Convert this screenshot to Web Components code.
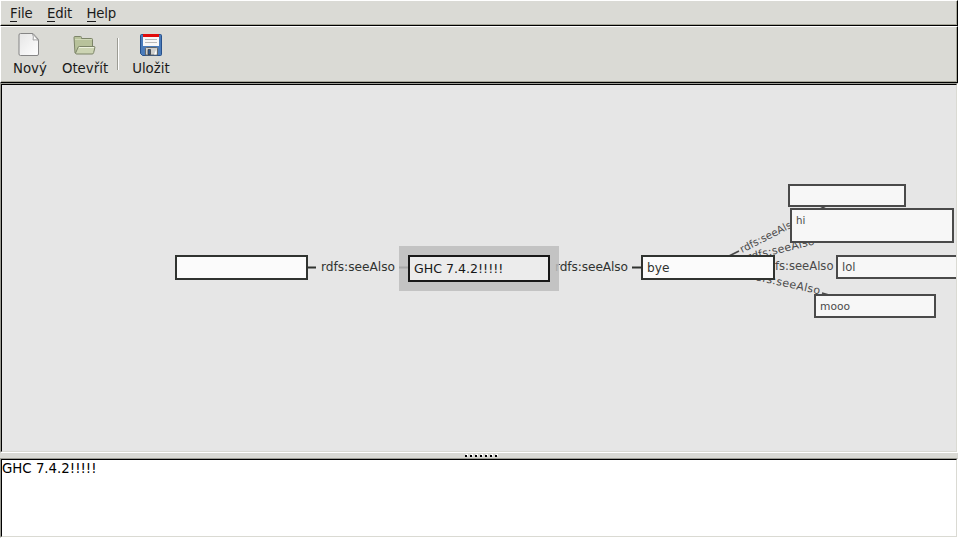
<!DOCTYPE html>
<html lang="cs"><head><meta charset="utf-8"><title>Graph editor</title>
<style>html,body{margin:0;height:100%;overflow:hidden}body{font:13.33px "DejaVu Sans",sans-serif;color:#1a1a1a;background:#dadad5}</style></head>
<body><graph-app></graph-app>
<script>
const define=(name,html,after)=>{
  const t=document.createElement('template');t.innerHTML=html;
  customElements.define(name,class extends HTMLElement{
    constructor(){super();this.attachShadow({mode:'open'}).append(t.content.cloneNode(true));}
    connectedCallback(){if(after)after(this);}
  });
};
define('menu-item',`<style>:host{display:block;letter-spacing:-.2px}u{text-decoration:none;display:inline-block;line-height:14px;border-bottom:1px solid #1a1a1a}</style><u></u><slot></slot>`,
 e=>e.shadowRoot.querySelector('u').textContent=e.getAttribute('key'));
define('menu-bar',`<style>:host{display:flex;flex:none;box-sizing:border-box;height:26px;padding:5px 0 0 9px;gap:14.500px;line-height:16px;border:solid;border-width:1px;border-color:#fff #000 #000 #fff;box-shadow:inset -1px -1px #a6a699}</style><slot></slot>`);
define('tool-button',`<style>:host{display:flex;flex-direction:column;align-items:center;height:49px}span{line-height:16px;margin-top:4px;white-space:nowrap}::slotted(svg){display:block;width:24px;height:24px}</style><slot name="icon"></slot><span><slot></slot></span>`);
define('tool-separator',`<style>:host{display:block;width:1px;height:32px;margin-top:5px;background:#9c9c94;border-right:1px solid #fff}</style>`);
define('tool-bar',`<style>:host{display:flex;flex:none;box-sizing:border-box;height:57px;padding:6px 0 0 12px;border:solid;border-width:1px;border-color:#fff #000 #000 #fff;box-shadow:inset -1px -1px #a6a699}
tool-button:nth-of-type(2){margin-left:15px}tool-button:nth-of-type(3){margin-left:13px}tool-separator{margin-left:9px}</style>
<tool-button><svg slot="icon" viewBox="0 0 24 24"><defs><linearGradient id="p" x2="1" y2="1"><stop stop-color="#e5e5e5"/><stop offset="1" stop-color="#fff"/></linearGradient></defs><path d="M2.500.5H15L20.500 6.500V21q0 1.500-1.500 1.500H2.500Q1 22.500 1 21V2Q1 .5 2.500.5Z" fill="url(#p)" stroke="#858585"/><path d="M14.500.7q1.400 3 .6 6.300 3-.5 5.200.2Z" fill="#fff" stroke="#999" stroke-width=".9"/></svg>Nový</tool-button>
<tool-button><svg slot="icon" viewBox="0 0 24 24"><path d="M1 4.500q0-1 1-1H7.500q1 0 1 1v1H18.500q1 0 1 1V20H2Z" fill="#b8c29b" stroke="#7c8468"/><path d="M2 6.500h16.800" stroke="#d0d8b8"/><path d="M5 14.500q.3-1 1.300-1H21q1 0 .9 1L20.700 19.500q-.3 1.500-1.500 1.500H3.500q-1 0-.8-1.200Z" fill="#ccd4b3" stroke="#7c8468"/><path d="M6 14.500h15" stroke="#edf1df"/></svg>Otevřít</tool-button>
<tool-separator></tool-separator>
<tool-button><svg slot="icon" viewBox="0 0 24 24"><path d="M2.500 1.500h19q1 0 1 1v19q0 1-1 1h-18l-2-2v-18q0-1 1-1Z" fill="#4a7cbb" stroke="#27508b"/><path d="M4 1h16v12H4Z" fill="#f8f8f8"/><path d="M4 1h16v3H4Z" fill="#e10b0b"/><path d="M6 6.500h12M6 9.500h12" stroke="#b9b9b9"/><path d="M6.500 22V15.500q0-1 1-1h10q1 0 1 1V22Z" fill="#d0d0cd" stroke="#62676a"/><path d="M9 16.500h2.500v5H9Z" fill="#315b94" stroke="#333" stroke-width=".7"/><path d="M15 21.500 17.500 16v5.500Z" fill="#fff"/></svg>Uložit</tool-button>`);
define('graph-node',`<style>:host{position:absolute;box-sizing:border-box;display:block;border:2px solid #303330;background:#fbfbfb;color:#303330;white-space:nowrap;padding-left:4px}
:host([far]){border-color:#4a4a4a;background:#f7f7f7;color:#4a4a4a}
:host([selected]){border-color:#181818;background:#ececec;color:#181818}</style><slot></slot>`,
 e=>{const [x,y,w,h,s,l]=e.getAttribute('box').split(' ');Object.assign(e.style,{left:x+'px',top:y+'px',width:w+'px',height:h+'px',fontSize:s+'px',lineHeight:l+'px'});});
define('graph-canvas',`<style>:host{display:block;position:relative;box-sizing:border-box;overflow:hidden;height:368px;background:#e6e6e6;border:solid;border-width:1px;border-color:#000 #dadad3 #dadad3 #000}
svg{position:absolute;left:-2px;top:-85px;width:958px;height:538px}text{white-space:pre}
.halo{position:absolute;left:397px;top:161px;width:160px;height:45px;background:rgba(188,188,188,.85)}</style>
<svg viewBox="0 0 958 538" fill="#303330" stroke="none" font-family="DejaVu Sans,sans-serif">
<path d="M307 267.500h9M399 267.500h12M632 267.500h12" stroke="#303330" stroke-width="2"/>
<path d="M729 256 739 251M820 209 826 206M822 293 829 295" stroke="#4a4a4a" stroke-width="1.700"/>
<text x="321" y="271" font-size="12.200" textLength="74">rdfs:seeAlso</text>
<text x="555" y="271" font-size="12.200" textLength="73">rdfs:seeAlso</text>
<g fill="#4a4a4a"><text x="763" y="270" font-size="11.600" textLength="70.500">rdfs:seeAlso</text>
<text transform="translate(742 253) rotate(-27)" font-size="10.300" textLength="63">rdfs:seeAlso</text>
<text transform="translate(748 261) rotate(-14)" font-size="11" textLength="69">rdfs:seeAlso</text>
<text transform="translate(750 279) rotate(12.500)" font-size="11" textLength="71">rdfs:seeAlso</text></g></svg>
<div class="halo"></div>
<graph-node far box="785.500 99 118 23 10 18"></graph-node>
<graph-node far box="788 123 164 35 10.200 21"><span>hi</span></graph-node>
<graph-node far box="834 170 150 24 11.600 20"><span>lol</span></graph-node>
<graph-node far box="812 209 122 24 10.700 21"><span>mooo</span></graph-node>
<graph-node box="173 170 133 25 12.200 21"></graph-node>
<graph-node box="639 170 134 25 12.200 22"><span>bye</span></graph-node>
<graph-node selected box="406 170 142 27 12.600 23"><span>GHC 7.4.2!!!!!</span></graph-node>`);
define('pane-grip',`<style>:host{display:flex;flex:none;box-sizing:border-box;height:5px;align-items:center;justify-content:center;gap:2px;padding:1px 0 0 4px}i{width:2px;height:2px;background:#000;box-shadow:1px -1px #fff;margin-right:1px}</style><i></i><i></i><i></i><i></i><i></i><i></i><i></i>`);
define('text-pane',`<style>:host{display:block;box-sizing:border-box;height:78px;padding:1px 0 0 0;background:#fff;border:solid;border-width:1px;border-color:#000 #dadad3 #dadad3 #000;line-height:16px;color:#000}</style><slot></slot>`);
define('sunken-frame',`<style>:host{display:block;flex:none;border:solid;border-width:1px;border-color:#9c9c94 #fff #fff #9c9c94}</style><slot></slot>`);
define('graph-app',`<style>:host{display:flex;flex-direction:column;width:958px;height:538px}</style>
<menu-bar><menu-item key="F">ile</menu-item><menu-item key="E">dit</menu-item><menu-item key="H">elp</menu-item></menu-bar><tool-bar></tool-bar>
<sunken-frame><graph-canvas></graph-canvas></sunken-frame><pane-grip></pane-grip><sunken-frame><text-pane>GHC 7.4.2!!!!!</text-pane></sunken-frame>`);
</script></body></html>
